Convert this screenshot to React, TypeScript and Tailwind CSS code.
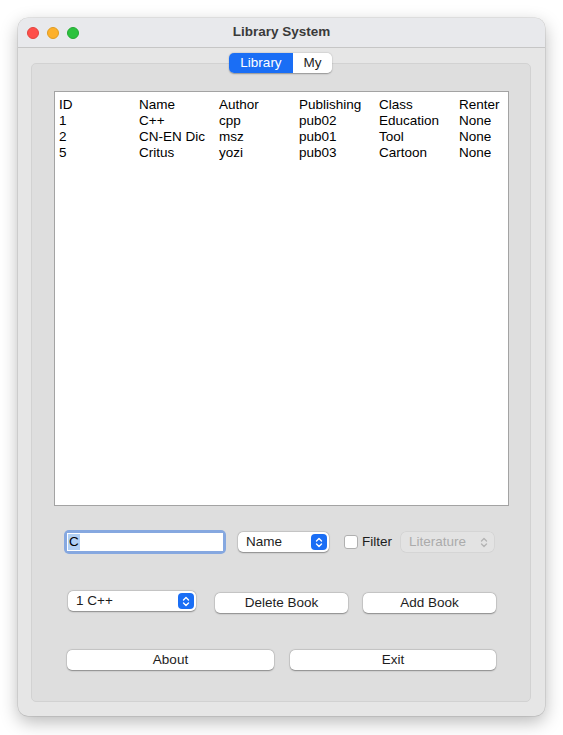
import React from 'react';

const rows = [
    ['ID', 'Name', 'Author', 'Publishing', 'Class', 'Renter'],
    ['1', 'C++', 'cpp', 'pub02', 'Education', 'None'],
    ['2', 'CN-EN Dic', 'msz', 'pub01', 'Tool', 'None'],
    ['5', 'Critus', 'yozi', 'pub03', 'Cartoon', 'None'],
];

const Stepper: React.FC<{ disabled?: boolean }> = ({ disabled }) => (
    <span
        className={`flex items-center justify-center w-[16px] h-[16px] rounded-[4px] ${
            disabled ? 'bg-transparent' : 'bg-[#1a6ef5]'
        }`}
    >
        <svg width="8" height="11" viewBox="0 0 8 11" fill="none">
            <path
                d="M1.5 4 L4 1.5 L6.5 4 M1.5 7 L4 9.5 L6.5 7"
                stroke={disabled ? '#b4b4b4' : '#ffffff'}
                strokeWidth="1.4"
                strokeLinecap="round"
                strokeLinejoin="round"
            />
        </svg>
    </span>
);

const Combo: React.FC<{ label: string; width: string; disabled?: boolean }> = ({ label, width, disabled }) => (
    <div
        className={`${width} h-[20px] flex items-center justify-between pl-[8px] pr-[2px] rounded-[5px] ${
            disabled
                ? 'bg-[#e3e3e3] text-[#ababab] shadow-[0_0_0_0.5px_rgba(0,0,0,0.08)]'
                : 'bg-white text-[#1d1d1d] shadow-[0_0.5px_1.5px_rgba(0,0,0,0.35),0_0_0_0.5px_rgba(0,0,0,0.1)]'
        }`}
    >
        <span>{label}</span>
        <Stepper disabled={disabled} />
    </div>
);

const Button: React.FC<{ label: string; width: string }> = ({ label, width }) => (
    <div
        className={`${width} h-[20px] flex items-center justify-center rounded-[5px] bg-white text-[#1d1d1d] shadow-[0_0.5px_1.5px_rgba(0,0,0,0.35),0_0_0_0.5px_rgba(0,0,0,0.1)]`}
    >
        {label}
    </div>
);

export default function App() {
    return (
        <div
            className="w-[563px] h-[735px] bg-white pt-[18px] pl-[18px] text-[13.5px]"
            style={{ fontFamily: '"Liberation Sans", Arial, sans-serif' }}
        >
            <div className="w-[527px] h-[698px] rounded-[10px] bg-[#e6e6e6] overflow-hidden flex flex-col shadow-[0_6px_18px_rgba(0,0,0,0.28),0_0_0_0.5px_rgba(0,0,0,0.15)]">
                {/* title bar */}
                <div className="relative h-[30px] shrink-0 bg-[#e8e9ec] border-b border-[#c6c6c6] flex items-center">
                    <div className="flex gap-[8px] pl-[9px]">
                        <span className="w-[12px] h-[12px] rounded-full bg-[#fe4f4a] border border-[#e2443e]" />
                        <span className="w-[12px] h-[12px] rounded-full bg-[#fdb02b] border border-[#df9c22]" />
                        <span className="w-[12px] h-[12px] rounded-full bg-[#2bc23e] border border-[#24a834]" />
                    </div>
                    <div className="absolute inset-0 flex items-center justify-center font-bold text-[#3a3a3a]">
                        Library System
                    </div>
                </div>

                {/* body */}
                <div className="flex flex-col pl-[13px] pt-[5px]">
                    <div className="relative z-10 flex ml-[198px] w-[103px] h-[20px] rounded-[5px] overflow-hidden shadow-[0_0.5px_1.5px_rgba(0,0,0,0.35)]">
                        <div className="w-[64px] flex items-center justify-center bg-[#1a6ef5] text-white">Library</div>
                        <div className="w-[39px] flex items-center justify-center bg-white text-[#1d1d1d]">My</div>
                    </div>

                    <div className="mt-[-10px] w-[500px] h-[639px] rounded-[5px] bg-[#dedede] border border-[#d2d2d2] flex flex-col">
                        <div className="ml-[22px] mt-[27px] w-[455px] h-[415px] bg-white border border-[#a3a3a3] pt-[5px] pl-[4px] text-black">
                            {rows.map((r, i) => (
                                <div key={i} className="flex h-[16px] leading-[16px]">
                                    {r.map((c, j) => (
                                        <span key={j} className="w-[80px] shrink-0">
                                            {c}
                                        </span>
                                    ))}
                                </div>
                            ))}
                        </div>

                        {/* search row */}
                        <div className="flex items-center mt-[24px] h-[24px]">
                            <div className="ml-[32px] w-[162px] h-[24px] rounded-[5px] bg-[#86a8e0] p-[3px]">
                                <div className="w-full h-full bg-white flex items-center pl-[1px]">
                                    <span className="bg-[#b2d0f4] text-black leading-[16px] px-[1px]">C</span>
                                </div>
                            </div>
                            <div className="ml-[12px]">
                                <Combo label="Name" width="w-[91px]" />
                            </div>
                            <span className="ml-[15px] w-[14px] h-[14px] rounded-[3px] bg-white border border-[#b0b0b0]" />
                            <span className="ml-[4px] text-[#1d1d1d]">Filter</span>
                            <div className="ml-[9px]">
                                <Combo label="Literature" width="w-[93px]" disabled />
                            </div>
                        </div>

                        {/* book row */}
                        <div className="flex items-start mt-[37px]">
                            <div className="ml-[36px]">
                                <Combo label="1 C++" width="w-[128px]" />
                            </div>
                            <div className="ml-[19px] mt-[2px]">
                                <Button label="Delete Book" width="w-[133px]" />
                            </div>
                            <div className="ml-[15px] mt-[2px]">
                                <Button label="Add Book" width="w-[133px]" />
                            </div>
                        </div>

                        {/* bottom row */}
                        <div className="flex mt-[37px]">
                            <div className="ml-[35px]">
                                <Button label="About" width="w-[207px]" />
                            </div>
                            <div className="ml-[16px]">
                                <Button label="Exit" width="w-[206px]" />
                            </div>
                        </div>
                    </div>
                </div>
            </div>
        </div>
    );
}
